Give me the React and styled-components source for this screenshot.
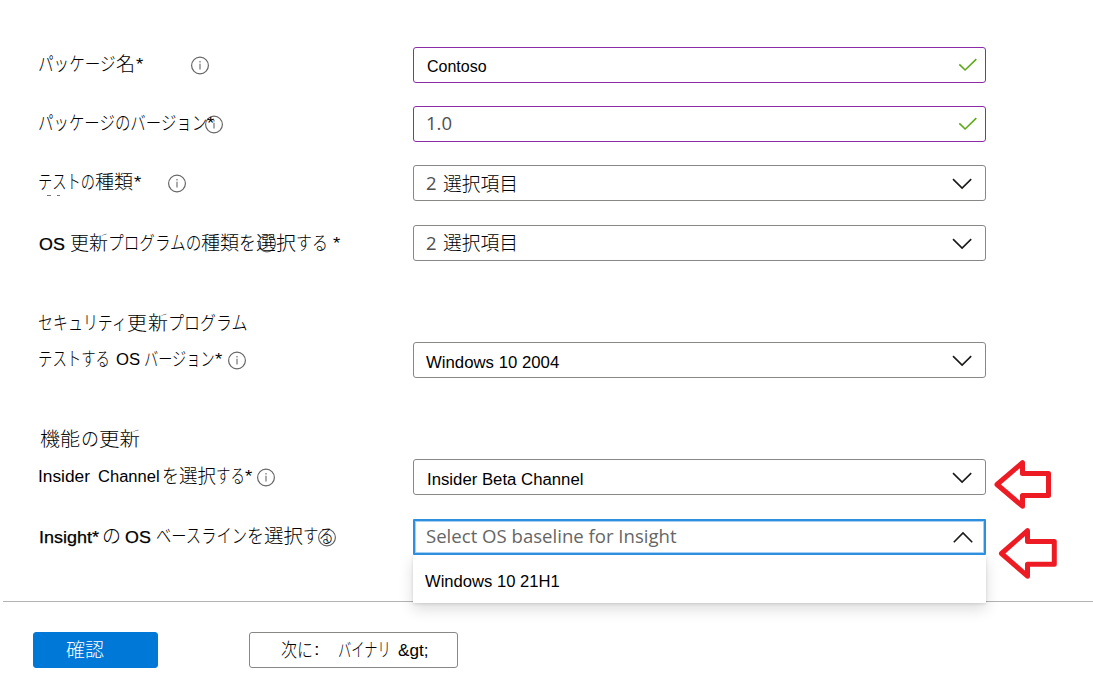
import React, { useLayoutEffect, useRef, useState } from 'react';
import styled, { createGlobalStyle, css } from 'styled-components';

const GlobalStyle = createGlobalStyle`
  * { box-sizing: border-box; }
  body { margin: 0; background: #fff; color: #000; overflow: hidden;
    font-family: "Liberation Sans", "Noto Sans CJK JP", sans-serif; font-size: 16px; }
`;

const Page = styled.main`
  width: 1093px;
  height: 691px;
  padding-top: 47px;
  display: flex;
  flex-direction: column;
`;

const Row = styled.div`
  display: grid;
  grid-template-columns: 413px 573px auto;
  grid-template-rows: 36px;
  flex: none;
  height: 36px;
  margin-bottom: ${(p) => p.$after ?? 23}px;
`;

const Label = styled.div`
  display: flex;
  align-items: center;
  padding-left: ${(p) => p.$left ?? 38}px;
  white-space: nowrap;
`;

const Heading = styled(Label)`
  height: 24px;
  margin-bottom: ${(p) => p.$after}px;
`;

const faces = {
  ja: css`font-family: "Noto Sans CJK JP", sans-serif; font-size: 19px; font-weight: 300; top: -1px;`,
  la: css`font-family: "Liberation Sans", sans-serif; font-size: 16px;`,
  os: css`font-family: "Liberation Sans", sans-serif; font-size: 16.5px; -webkit-text-stroke: 0.25px #000;`,
  ui: css`font-family: "Open Sans", sans-serif; font-size: 18.5px;`,
};

const RunBox = styled.span`
  position: relative;
  display: inline-block;
  flex: none;
  width: ${(p) => p.$w}px;
  height: 24px;
  line-height: 24px;
  margin-left: ${(p) => p.$gap}px;
  margin-top: ${(p) => p.$dy * 2}px;
  color: ${(p) => p.$color};
  white-space: pre;
  ${(p) => faces[p.$face]}
`;

const RunText = styled.span`
  display: inline-block;
  transform-origin: 0 50%;
`;

function Run({ children, w, gap = 0, dy = -1, face = 'ja', color = '#000' }) {
  const ref = useRef(null);
  const [scale, setScale] = useState(1);
  useLayoutEffect(() => {
    setScale(w / ref.current.offsetWidth);
  }, [w]);
  return (
    <RunBox $w={w} $gap={gap} $dy={dy} $face={face} $color={color}>
      <RunText ref={ref} style={{ transform: `scaleX(${scale})` }}>{children}</RunText>
    </RunBox>
  );
}

const InfoSvg = styled.svg`
  flex: none;
  width: 20px;
  height: 20px;
  margin-left: ${(p) => p.$gap}px;
`;

const Info = ({ gap }) => (
  <InfoSvg $gap={gap} viewBox="0 0 20 20" fill="none">
    <circle cx="10" cy="10.5" r="8.4" stroke="#666" strokeWidth="1.2" />
    <path d="M10 8.8v5.7M10 6v1.5" stroke="#888" strokeWidth="1.4" />
  </InfoSvg>
);

const borders = { valid: '#8a2da5', plain: '#8a8886', open: '#2e8fdd' };

const Field = styled.div`
  position: relative;
  display: flex;
  align-items: center;
  height: 36px;
  padding-left: ${(p) => (p.$kind === 'open' ? 10 : 12)}px;
  padding-right: ${(p) => (p.$kind === 'valid' ? 7 : p.$kind === 'open' ? 11 : 13)}px;
  border: ${(p) => (p.$kind === 'open' ? 2 : 1)}px solid ${(p) => borders[p.$kind]};
  border-radius: ${(p) => (p.$kind === 'open' ? 1 : 3)}px;
  box-shadow: ${(p) => (p.$kind === 'open' ? 'inset 0 0 0 1px #a5d0f3' : 'none')};
  background: #fff;
`;

const FieldIcon = styled.svg`
  margin-left: auto;
  flex: none;
  width: 20px;
  height: 16px;
  fill: none;
`;

const Check = () => (
  <FieldIcon viewBox="0 0 20 16">
    <path d="M1.3 7.4l5.8 5.6L18.3 2.2" stroke="#5eaa16" strokeWidth="1.6" />
  </FieldIcon>
);

const Chevron = ({ up }) => (
  <FieldIcon viewBox="0 0 20 16">
    <path d={up ? 'M.8 13.2L10 4l9.2 9.2' : 'M1 4.1L10.1 13.1l9.1-9'} stroke="#1b1a19" strokeWidth="1.6" />
  </FieldIcon>
);

const Menu = styled.div`
  position: absolute;
  z-index: 2;
  top: 34px;
  left: -2px;
  width: 573px;
  height: 48px;
  display: flex;
  align-items: center;
  padding: 5px 12px 0;
  background: #fff;
  box-shadow: 0 6px 14px rgba(0, 0, 0, 0.14), 0 1px 3px rgba(0, 0, 0, 0.12);
  clip-path: inset(0 -24px -30px -24px);
`;

const Arrow = styled.svg`
  width: 60px;
  height: 52px;
  margin-left: ${(p) => p.$left}px;
  margin-top: ${(p) => p.$top}px;
  fill: #fff;
  stroke: #ed1c24;
  stroke-width: 5;
  stroke-linejoin: round;
`;

const Divider = styled.hr`
  width: 1090px;
  height: 1px;
  margin: 46px 0 0 3px;
  border: 0;
  flex: none;
  background: #b3b3b3;
`;

const Footer = styled.footer`
  display: flex;
  gap: 91px;
  padding: 30px 0 0 33px;
`;

const Button = styled.button`
  display: flex;
  align-items: center;
  height: 36px;
  width: ${(p) => p.$width}px;
  padding: 0 0 0 ${(p) => (p.$primary ? 32 : 31)}px;
  border: 1px solid ${(p) => (p.$primary ? '#0078d7' : '#8a8886')};
  border-radius: 3px;
  background: ${(p) => (p.$primary ? '#0078d7' : '#fff')};
`;

const Marks = styled.svg`
  width: 14px;
  height: 2px;
  position: absolute;
  left: 47px;
  top: 195px;
`;

const Star = ({ gap = 1, dy = -1 }) => <Run face="la" w={7} gap={gap} dy={dy}>*</Run>;

export default function App() {
  return (
    <>
      <GlobalStyle />
      <Page>
        <Row>
          <Label><Run w={78}>パッケージ</Run><Run w={19}>名</Run><Star dy={0} /><Info gap={47} /></Label>
          <Field $kind="valid"><Run face="la" w={60} gap={1} dy={2}>Contoso</Run><Check /></Field>
        </Row>
        <Row>
          <Label><Run w={169}>パッケージのバージョン</Run><Star gap={0} dy={0} /><Info gap={-10} /></Label>
          <Field $kind="valid"><Run face="ui" w={26} color="#505050">1.0</Run><Check /></Field>
        </Row>
        <Row $after={24}>
          <Label><Run w={57}>テストの</Run><Run w={38}>種類</Run><Star dy={0} /><Info gap={26} /></Label>
          <Field $kind="plain"><Run face="ui" w={11} color="#505050" dy={0}>2</Run><Run w={75} gap={6} dy={1}>選択項目</Run><Chevron /></Field>
        </Row>
        <Marks viewBox="0 0 14 2"><path d="M0 .5h4M10 .5h3" stroke="#777" /></Marks>
        <Row $after={50}>
          <Label $left={39}>
            <Run face="os" w={26} dy={1}>OS</Run><Run w={38} gap={5} dy={0}>更新</Run><Run w={93} dy={0}>プログラムの</Run>
            <Run w={38} dy={0}>種類</Run><Run w={17} dy={0}>を</Run><Info gap={1} /><Run w={40} gap={-21} dy={0}>選択</Run>
            <Run w={32} dy={0}>する</Run><Star gap={5} dy={1} />
          </Label>
          <Field $kind="plain"><Run face="ui" w={11} color="#505050" dy={0}>2</Run><Run w={75} gap={6} dy={0}>選択項目</Run><Chevron /></Field>
        </Row>
        <Heading $after={7}><Run w={89} dy={0}>セキュリティ</Run><Run w={20} dy={0}>更</Run><Run w={20} gap={1} dy={0}>新</Run><Run w={79} dy={0}>プログラム</Run></Heading>
        <Row $after={49}>
          <Label><Run w={72}>テストする</Run><Run face="la" w={24} gap={6} dy={0}>OS</Run><Run w={71} gap={4}>バージョン</Run><Star gap={0} dy={0} /><Info gap={5} /></Label>
          <Field $kind="plain"><Run face="la" w={133} dy={3}>Windows 10 2004</Run><Chevron /></Field>
        </Row>
        <Heading $left={40} $after={8}><Run w={40} dy={0}>機能</Run><Run w={18} gap={1} dy={0}>の</Run><Run w={41} dy={0}>更新</Run></Heading>
        <Row $after={24}>
          <Label>
            <Run face="la" w={52} dy={0}>Insider</Run><Run face="la" w={62} gap={8} dy={0}>Channel</Run><Run w={17} gap={2}>を</Run>
            <Run w={37}>選択</Run><Run w={29}>する</Run><Star gap={0} dy={0} /><Info gap={4} />
          </Label>
          <Field $kind="plain"><Run face="la" w={156} gap={1} dy={3}>Insider Beta Channel</Run><Chevron /></Field>
          <Arrow $left={7} $top={-1} viewBox="0 0 60 52">
            <path d="M4 26.5L29.5 4.7V15.5H55.5V37.5H29.5V48.2Z" />
          </Arrow>
        </Row>
        <Row $after={0}>
          <Label $left={39}>
            <Run face="os" w={60} dy={0}>Insight*</Run><Run w={19} gap={3}>の</Run><Run face="os" w={26} gap={4} dy={0}>OS</Run>
            <Run w={91} gap={5}>ベースライン</Run><Run w={17}>を</Run><Run w={39}>選択</Run><Run w={31}>する</Run><Info gap={-17} />
          </Label>
          <Field $kind="open">
            <Run face="ui" w={251} gap={1} color="#666">Select OS baseline for Insight</Run><Chevron up />
            <Menu><Run face="la" w={135} dy={0}>Windows 10 21H1</Run></Menu>
          </Field>
          <Arrow $left={12} $top={8} viewBox="0 0 60 52">
            <path d="M3.5 26.5L29.5 3.7V14.5H56.3V37.3H29.5V49.2Z" />
          </Arrow>
        </Row>
        <Divider />
        <Footer>
          <Button $primary $width={125}><Run w={38} color="#fff" dy={0}>確認</Run></Button>
          <Button $width={209}>
            <Run w={32} dy={0}>次に</Run><Run w={5} gap={1} face="la" dy={0}>:</Run>
            <Run w={53} gap={19} dy={0}>バイナリ</Run><Run face="la" w={30} gap={6} dy={1}>&amp;gt;</Run>
          </Button>
        </Footer>
      </Page>
    </>
  );
}
